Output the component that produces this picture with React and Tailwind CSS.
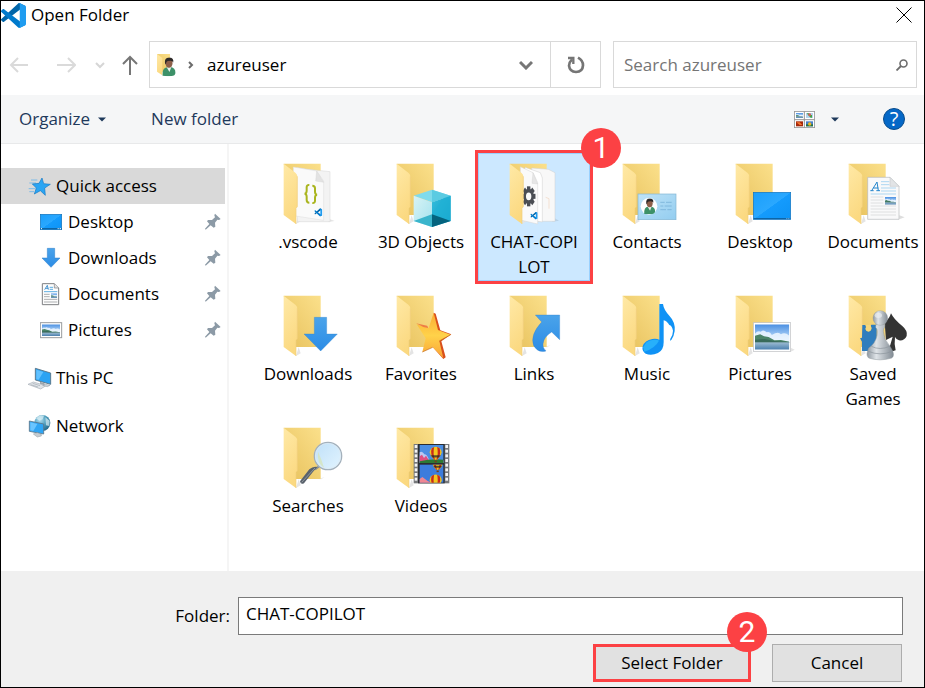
import React from "react";

function VsCodeLogo({ className, x, y, width, height }) {
  return (
    <svg viewBox="0 0 100 100" className={className} x={x} y={y} width={width} height={height} aria-hidden="true">
      <path fill="#0065A9" d="M96.4614 10.7962L75.8569 0.875542C73.4719 -0.272773 70.6217 0.211611 68.75 2.08333L1.29858 63.5832C-0.515693 65.2373 -0.513607 68.0937 1.30308 69.7452L6.81272 74.754C8.29793 76.1042 10.5347 76.2036 12.1338 74.9905L93.3609 13.3699C96.086 11.3026 100 13.2462 100 16.6667V16.4275C100 14.0265 98.6246 11.8378 96.4614 10.7962Z" />
      <path fill="#007ACC" d="M96.4614 89.2038L75.8569 99.1245C73.4719 100.273 70.6217 99.7884 68.75 97.9167L1.29858 36.4169C-0.515693 34.7627 -0.513607 31.9063 1.30308 30.2548L6.81272 25.246C8.29793 23.8958 10.5347 23.7964 12.1338 25.0095L93.3609 86.6301C96.086 88.6974 100 86.7538 100 83.3334V83.5726C100 85.9735 98.6246 88.1622 96.4614 89.2038Z" />
      <path fill="#1F9CF0" d="M75.8578 99.1263C73.4721 100.274 70.6219 99.7885 68.75 97.9166C71.0564 100.223 75 98.5895 75 95.3278V4.67213C75 1.41039 71.0564 -0.223106 68.75 2.08327C70.6219 0.211402 73.4721 -0.273666 75.8578 0.873633L96.4587 10.7807C98.6234 11.8217 100 14.0112 100 16.4132V83.5871C100 85.9891 98.6234 88.1786 96.4586 89.2196L75.8578 99.1263Z" />
    </svg>
  );
}

/* Gradients shared by every drawing in the dialog. */
function Gradients() {
  return (
    <svg width="0" height="0" className="absolute" aria-hidden="true">
      <defs>
        <linearGradient id="back" x1="0" y1="1" x2="1" y2="0">
          <stop offset="0.2" stopColor="#ebc765" />
          <stop offset="1" stopColor="#fbe08b" />
        </linearGradient>
        <linearGradient id="flap" x1="0" y1="0" x2="0.3" y2="1">
          <stop offset="0" stopColor="#ffe9a6" />
          <stop offset="1" stopColor="#fbd981" />
        </linearGradient>
        <linearGradient id="blueArrow" x1="0" y1="0" x2="0" y2="1">
          <stop offset="0" stopColor="#4aa3ea" />
          <stop offset="1" stopColor="#2b8ce6" />
        </linearGradient>
        <linearGradient id="screen" x1="0" y1="0" x2="1" y2="1">
          <stop offset="0" stopColor="#1b9ffb" />
          <stop offset="0.5" stopColor="#2aa8ff" />
          <stop offset="0.51" stopColor="#149bfd" />
          <stop offset="1" stopColor="#0d93f5" />
        </linearGradient>
        <linearGradient id="star" x1="0" y1="0" x2="0" y2="1">
          <stop offset="0" stopColor="#fbab32" />
          <stop offset="0.5" stopColor="#ffd24a" />
          <stop offset="1" stopColor="#f9a336" />
        </linearGradient>
        <linearGradient id="card" x1="0" y1="0" x2="1" y2="1">
          <stop offset="0" stopColor="#bfe3f7" />
          <stop offset="1" stopColor="#93cdf0" />
        </linearGradient>
        <linearGradient id="sky" x1="0" y1="0" x2="0" y2="1">
          <stop offset="0" stopColor="#4a8fe2" />
          <stop offset="1" stopColor="#d9efff" />
        </linearGradient>
        <linearGradient id="water" x1="0" y1="0" x2="0" y2="1">
          <stop offset="0" stopColor="#9dbcd2" />
          <stop offset="1" stopColor="#4a7fae" />
        </linearGradient>
        <linearGradient id="pawn" x1="0" y1="0" x2="1" y2="0">
          <stop offset="0" stopColor="#8e979f" />
          <stop offset="0.35" stopColor="#dfe4e8" />
          <stop offset="1" stopColor="#818a93" />
        </linearGradient>
        <linearGradient id="lens" x1="0" y1="0" x2="1" y2="1">
          <stop offset="0" stopColor="#bfe0f8" />
          <stop offset="1" stopColor="#e2f4ff" />
        </linearGradient>
        <linearGradient id="cubeL" x1="0" y1="0" x2="1" y2="1">
          <stop offset="0" stopColor="#d8f3f5" />
          <stop offset="1" stopColor="#a4e2ee" />
        </linearGradient>
        <linearGradient id="cubeR" x1="0" y1="0" x2="1" y2="1">
          <stop offset="0" stopColor="#35bfdd" />
          <stop offset="1" stopColor="#0796c2" />
        </linearGradient>
        <radialGradient id="globe" cx="0.35" cy="0.3" r="0.8">
          <stop offset="0" stopColor="#b5dff0" />
          <stop offset="0.5" stopColor="#4f9ebd" />
          <stop offset="1" stopColor="#1d5f82" />
        </radialGradient>
      </defs>
    </svg>
  );
}

function Folder({ children, filled }) {
  return (
    <svg viewBox="0 0 216 198" className="h-[66px] w-[72px] shrink-0" aria-hidden="true">
      <path d="M72 183l14-8-6-18z" fill="#e4e4e4" />
      <path d="M140 156l18-6-10 7z" fill="#e9e9e9" />
      <path d="M35 2H146V156H72Z" fill="url(#back)" />
      {filled ? children : null}
      <path d="M35 2L70 29Q76 34 76 40V131L72 136V183L35 156Z" fill="url(#flap)" />
      <path d="M76 40V131L72 136V183" fill="none" stroke="#f0cf7b" strokeWidth="2" />
      {filled ? null : children}
    </svg>
  );
}

function Landscape({ x, y, w, h }) {
  return (
    <svg x={x} y={y} width={w} height={h} viewBox="0 0 106 76" preserveAspectRatio="none">
      <rect width="106" height="54" fill="url(#sky)" />
      <path d="M0 28q8-10 18-6 8-8 18 2 10-4 16 8 20-12 28-2 12-8 26 4V50H0z" fill="#eef7ff" opacity="0.85" />
      <path d="M0 34L16 30l12 6 14 2 18 10 20-1 26 5v3H0z" fill="#4b8468" />
      <path d="M0 46l30-2 30 6 46 3v3H0z" fill="#386a5a" />
      <rect y="54" width="106" height="22" fill="url(#water)" />
    </svg>
  );
}

function Person({ x, y, w, h }) {
  return (
    <svg x={x} y={y} width={w} height={h} viewBox="0 0 60 80">
      <path d="M3 78Q0 44 22 42L34 40Q58 44 57 66 56 78 40 79 20 81 3 78z" fill="#3d9168" />
      <path d="M20 42L32 62 40 41z" fill="#e8f0ec" />
      <ellipse cx="30" cy="24" rx="15" ry="20" fill="#8d5f49" />
      <path d="M13 24Q10 2 30 1 51 1 48 22 45 14 36 14 22 14 19 20 18 28 16 30z" fill="#2d2928" />
    </svg>
  );
}

function Balloon({ x, y, s }) {
  return (
    <g transform={`translate(${x} ${y}) scale(${s})`}>
      <path d="M-20-5a20 19 0 0 1 40 0Q18 8 5 19H-5Q-18 8-20-5z" fill="#f2c61f" />
      <path d="M-13-19Q-20 0-5 19H-2Q-10 0-5-23zM13-19Q20 0 5 19H2Q10 0 5-23z" fill="#c92a1c" />
      <path d="M-17 4h34l-6 8h-22z" fill="#24252b" opacity="0.75" />
      <rect x="-4" y="22" width="8" height="6" fill="#71401d" />
    </g>
  );
}

function VsCodeFolder() {
  return (
    <Folder filled>
      <g transform="translate(-66 -54)">
        <path d="M238 222l16 6-20 3z" fill="#e4e4e4" />
        <path d="M166 72L240 80V230H142V68z" fill="#f3f3f3" stroke="#d4d4d4" strokeWidth="1.5" />
        <path d="M130 66L200 78 221 108V226L130 212z" fill="#fafafa" stroke="#dcdcdc" strokeWidth="1.5" />
        <path d="M200 78L197 108 221 112z" fill="#e3e3e3" stroke="#cfcfcf" strokeWidth="1" />
        <g fill="none" stroke="#aab51f" strokeWidth="6">
          <path d="M178 120q-8-1-8 7v10q0 8-6 9 6 1 6 9v10q0 8 8 8" />
          <path d="M187 122q8 0 8 8v10q0 8 6 9-6 1-6 9v9q0 8-8 7" />
        </g>
        <VsCodeLogo x="193" y="188" width="24" height="28" />
      </g>
    </Folder>
  );
}

function ObjectsFolder() {
  return (
    <Folder>
      <g transform="translate(-405 -54)">
        <path d="M491 152L546 134 602 152 546 172z" fill="#7fdbec" />
        <path d="M546 134L602 152 546 172z" fill="#5bcbe2" />
        <path d="M491 152L546 172V246L491 228z" fill="url(#cubeL)" />
        <path d="M491 228L546 208V246z" fill="#3ab5cc" />
        <path d="M546 172L602 152V228L546 246z" fill="url(#cubeR)" />
        <path d="M602 152V228L546 208 580 160z" fill="#21b2d6" opacity="0.7" />
        <path d="M546 208L602 228 546 246z" fill="#04637e" />
      </g>
    </Folder>
  );
}

function CopilotFolder() {
  const teeth = [0, 45, 90, 135, 180, 225, 270, 315];
  return (
    <Folder filled>
      <g transform="translate(-99 -129)">
        <path d="M262 290l20 12-20 3z" fill="#b9d3e8" />
        <path d="M200 144L250 148 270 158V304H200z" fill="#f8f8f8" stroke="#d0d0d0" strokeWidth="1.5" />
        <path d="M180 142L226 158 232 174V306L180 298z" fill="#fff" stroke="#cfcfcf" strokeWidth="1.5" />
        <path d="M166 140L204 158 218 188V312L166 300z" fill="#fafafa" stroke="#d4d4d4" strokeWidth="1.5" />
        <path d="M204 158l-3 32 17 2z" fill="#e6e6e6" stroke="#ccc" strokeWidth="1" />
        <path d="M242 232l10 4v30" fill="none" stroke="#f4e1d2" strokeWidth="3" />
        <g transform="translate(191 229) scale(0.85 1.25)">
          {teeth.map((a) => (
            <rect key={a} x="-6" y="-24" width="12" height="12" fill="#4b4e54" transform={`rotate(${a})`} />
          ))}
          <circle r="14" fill="none" stroke="#4b4e54" strokeWidth="9" />
        </g>
        <VsCodeLogo x="196" y="272" width="22" height="30" />
      </g>
    </Folder>
  );
}

function ContactsFolder() {
  return (
    <Folder>
      <g transform="translate(-438 -129)">
        <rect x="519" y="222" width="114" height="77" fill="url(#card)" stroke="#82b4d3" strokeWidth="2" />
        <circle cx="552" cy="259" r="25" fill="#fff" />
        <Person x="530" y="235" w="48" h="48" />
        <path d="M586 247h13m4 0h17M586 258h9m4 0h21M586 269h17m4 0h13" stroke="#6ea9d2" strokeWidth="2" />
      </g>
    </Folder>
  );
}

function DesktopFolder() {
  return (
    <Folder>
      <g transform="translate(-72 -39)">
        <rect x="160" y="127" width="112" height="81" fill="url(#screen)" stroke="#1173bd" strokeWidth="2" />
        <path d="M161 206H271" stroke="#0d5c98" strokeWidth="3" />
        <path d="M259 206h3m3 0h3" stroke="#d8ecfa" strokeWidth="2" />
      </g>
    </Folder>
  );
}

function DocumentsFolder() {
  return (
    <Folder>
      <g transform="translate(-411 -39)">
        <path d="M598 196l16 6-16 6z" fill="#dedede" />
        <path d="M503 82H570L597 109V208H503z" fill="#f9f9fa" stroke="#b5b8bb" strokeWidth="2" />
        <path d="M570 82V109H597z" fill="#e2e4e6" stroke="#bfc2c5" strokeWidth="1.5" />
        <path d="M543 95h25M543 104h25M543 114h45M543 123h45M512 132h76" stroke="#9dd0ef" strokeWidth="2.5" />
        <path d="M515 122L531 96 535 122M520 114H535M511 122H521M529 122H540" fill="none" stroke="#2485cc" strokeWidth="3" />
        <path d="M512 141h38M512 150h38M512 159h38M512 168h76M512 177h76M512 186h76M512 195h76" stroke="#d0d2d4" strokeWidth="2" />
        <Landscape x={555} y={141} w={33} h={23} />
      </g>
    </Folder>
  );
}

function DownloadsFolder() {
  return (
    <Folder>
      <g transform="translate(-66 -30)">
        <path d="M193 97H230V147H262L212 198 162 147H193z" fill="url(#blueArrow)" stroke="#2f7fc9" strokeWidth="1" />
      </g>
    </Folder>
  );
}

function FavoritesFolder() {
  return (
    <Folder>
      <g transform="translate(-405 -30)">
        <path d="M551 83L557 86 571 136 604 148 574 169 587 217 580 222 548 186z" fill="#d9501c" />
        <path d="M551 83L564 135 602 149 568 168 580 220 548 187 517 201 527 160 500 118 536 129z" fill="url(#star)" />
        <path d="M498 115L531 122 536 129 520 126z" fill="#ee7d45" />
        <path d="M548 187L517 201M602 149L568 168" stroke="#bf6517" strokeWidth="2" />
      </g>
    </Folder>
  );
}

function LinksFolder() {
  return (
    <Folder>
      <g transform="translate(-69 -30)">
        <path d="M181 90H254V164L230 141Q206 155 204 177 203 189 213 198 190 205 176 182 164 150 200 111z" fill="url(#blueArrow)" stroke="#2e7dc8" strokeWidth="1" />
      </g>
    </Folder>
  );
}

function MusicFolder() {
  return (
    <Folder>
      <g transform="translate(-408 -30)">
        <path d="M553 57H564Q566 74 583 92 602 112 599 138 597 154 589 165L585 167 586 161Q594 150 594 137 591 122 583 120 576 108 566 106V172Q566 196 549 204 529 213 512 206 500 199 503 184 509 166 532 162 544 160 553 164z" fill="#0f92f5" />
        <path d="M505 187Q512 168 532 165 547 163 552 167 540 190 508 200z" fill="#27b0fb" />
      </g>
    </Folder>
  );
}

function PicturesFolder() {
  return (
    <Folder>
      <g transform="translate(-72 -30)">
        <path d="M272 188l12 6-12 6z" fill="#e4e4e4" />
        <rect x="160" y="113" width="112" height="86" fill="#fff" stroke="#bcbec0" strokeWidth="2" />
        <Landscape x={165} y={118} w={103} h={76} />
      </g>
    </Folder>
  );
}

function GamesFolder() {
  return (
    <Folder>
      <g transform="translate(-411 -30)">
        <path d="M487 120H496Q500 126 496 132 500 143 510 138 518 132 512 122L514 119H530V198H486V183L495 188V182Q492 171 504 168 512 166 515 176 516 184 506 188L507 198H486V170L480 160 486 158z" fill="#2f7dbd" />
        <path d="M497 120Q501 126 497 132 500 142 510 138 517 132 511 120z" fill="#f6d87d" />
        <path d="M573 85Q582 104 606 122 624 137 620 153 613 168 597 166 589 164 585 156 582 178 587 196L572 200 568 190 578 155 558 165 554 112Q568 102 573 85z" fill="#333" />
        <path d="M528 118H555L554 127Q549 132 550 139 551 164 570 184L578 198Q584 214 575 219 540 230 506 219 498 212 503 198 504 188 514 183 533 163 532 139 532 131 527 127z" fill="url(#pawn)" stroke="#8b949b" strokeWidth="1.5" />
        <path d="M505 199Q540 214 577 199M514 184Q540 197 569 184" fill="none" stroke="#8b949b" strokeWidth="2" />
        <circle cx="541" cy="99" r="22" fill="url(#pawn)" stroke="#8b949b" strokeWidth="1" />
        <ellipse cx="535" cy="91" rx="11" ry="8" fill="#e9edf0" opacity="0.7" />
      </g>
    </Folder>
  );
}

function SearchesFolder() {
  return (
    <Folder>
      <g transform="translate(-66 -36)">
        <path d="M195 163L207 154" stroke="#8a9097" strokeWidth="6" />
        <path d="M202 156L188 172 162 205Q152 210 150 199L178 163Q190 152 202 156z" fill="#5a626c" />
        <path d="M195 159L155 202" stroke="#8e979f" strokeWidth="3" />
        <circle cx="234" cy="123" r="41" fill="url(#lens)" stroke="#a3b0bb" strokeWidth="4" />
        <circle cx="234" cy="123" r="38" fill="none" stroke="#dfeaf2" strokeWidth="2" />
        <path d="M204 110Q200 145 222 158 214 130 204 110z" fill="#d6e5bd" opacity="0.8" />
      </g>
    </Folder>
  );
}

function VideosFolder() {
  const holes = [90, 104, 118, 132, 146, 160, 174, 188];
  return (
    <Folder>
      <g transform="translate(-405 -36)">
        <rect x="491" y="87" width="107" height="118" fill="#77797c" />
        <rect x="504" y="87" width="80" height="118" fill="#2b2d31" />
        {holes.map((y) => (
          <g key={y} fill="#f4f4f4">
            <rect x="494" y={y} width="8" height="9" />
            <rect x="586" y={y} width="8" height="9" />
          </g>
        ))}
        <rect x="509" y="90" width="71" height="54" fill="#4a8de3" />
        <rect x="509" y="149" width="71" height="54" fill="#3c7cdc" />
        <path d="M509 112q8-6 14 6 8 0 14 16l43 2v8h-71z" fill="#b9c7f2" />
        <path d="M509 124l7-5 6 10 6-7 12 18h-31z" fill="#e04f82" />
        <path d="M509 139q36-9 71-5v10h-71z" fill="#2c7a34" />
        <path d="M509 192l8-6 8 6 8 6 12 5h-36z" fill="#ef8793" />
        <Balloon x={557} y={117} s={0.9} />
        <svg x="546" y="149" width="34" height="28" viewBox="0 0 34 28">
          <Balloon x={17} y={0} s={0.8} />
        </svg>
        <svg x="532" y="176" width="48" height="27" viewBox="0 0 48 27">
          <Balloon x={25} y={24} s={0.9} />
        </svg>
      </g>
    </Folder>
  );
}

const FILES = [
  { name: ".vscode", Icon: VsCodeFolder },
  { name: "3D Objects", Icon: ObjectsFolder },
  { name: "CHAT-COPILOT", Icon: CopilotFolder, selected: true },
  { name: "Contacts", Icon: ContactsFolder },
  { name: "Desktop", Icon: DesktopFolder },
  { name: "Documents", Icon: DocumentsFolder },
  { name: "Downloads", Icon: DownloadsFolder },
  { name: "Favorites", Icon: FavoritesFolder },
  { name: "Links", Icon: LinksFolder },
  { name: "Music", Icon: MusicFolder },
  { name: "Pictures", Icon: PicturesFolder },
  { name: "Saved Games", Icon: GamesFolder },
  { name: "Searches", Icon: SearchesFolder },
  { name: "Videos", Icon: VideosFolder },
];

function SideSvg({ children, viewBox }) {
  return (
    <svg viewBox={viewBox} className="size-6 shrink-0" aria-hidden="true">
      {children}
    </svg>
  );
}

const QuickIcon = () => (
  <SideSvg viewBox="84 72 72 72">
    <path d="M93 90H112M88 99H108M86 116H106M88 125H102" stroke="#7dbbe6" strokeWidth="3" />
    <path d="M126 84L131 101 151 103 134 114 136 136 121 122 103 132 109 114 97 102 117 100z" fill="#2aa5f3" stroke="#1579c4" strokeWidth="2" />
  </SideSvg>
);
const DesktopIcon = () => (
  <SideSvg viewBox="120 180 72 72">
    <rect x="121" y="193" width="64" height="46" fill="url(#screen)" stroke="#1170b7" strokeWidth="2" />
    <path d="M121 236H185" stroke="#0d66a8" strokeWidth="4" />
    <path d="M123 236h3M173 236h3m3 0h4" stroke="#fff" strokeWidth="3" />
  </SideSvg>
);
const DownloadIcon = () => (
  <SideSvg viewBox="120 288 72 72">
    <path d="M142 295H164V324H180L153 352 126 324H142z" fill="url(#blueArrow)" stroke="#2a7dc9" strokeWidth="1.5" />
  </SideSvg>
);
const DocumentIcon = () => (
  <SideSvg viewBox="120 396 72 72">
    <path d="M127 401H163L176 414V464H127z" fill="#fdfdfd" stroke="#7d7f82" strokeWidth="3" />
    <path d="M163 401V414H176" fill="#e3e3e3" stroke="#7d7f82" strokeWidth="2" />
    <path d="M134 419L142 406 145 419M137 415h8" fill="none" stroke="#2a83c8" strokeWidth="2.5" />
    <path d="M149 412h10M149 418h10M132 425h40" stroke="#3f9ddb" strokeWidth="2.5" />
    <path d="M132 433h17M132 440h17M132 448h40M132 456h40" stroke="#9b9da0" strokeWidth="2.5" />
    <Landscape x={153} y={430} w={18} h={14} />
  </SideSvg>
);
const PictureIcon = () => (
  <SideSvg viewBox="120 504 72 72">
    <rect x="121" y="518" width="64" height="45" fill="#fff" stroke="#9a9c9f" strokeWidth="3" />
    <Landscape x={126} y={523} w={54} h={35} />
  </SideSvg>
);
const PcIcon = () => (
  <SideSvg viewBox="84 648 72 72">
    <path d="M106 655L152 669V703L106 690z" fill="#2ca3f3" stroke="#566b7a" strokeWidth="2.5" />
    <path d="M109 659L130 666 116 689 109 688z" fill="#61c1ff" />
    <path d="M120 695L134 700V706L120 703z" fill="#9ca5ac" />
    <path d="M84 703L100 696 138 707 122 717z" fill="#dfe3e7" stroke="#a9b1b8" strokeWidth="2" />
    <path d="M92 704l22 7M98 700l22 7M136 703l14 3-8 4-14-4z" stroke="#909ba4" strokeWidth="1.5" fill="#cfd5d9" />
  </SideSvg>
);
const NetworkIcon = () => (
  <SideSvg viewBox="84 792 72 72">
    <circle cx="127" cy="819" r="24" fill="url(#globe)" />
    <path d="M108 805Q120 792 132 797L128 808 118 812zM136 802L149 812 148 828 138 826z" fill="#dbf0f5" opacity="0.7" />
    <path d="M88 813L131 822V852L88 844z" fill="#2fa5f4" stroke="#5b7688" strokeWidth="2.5" />
    <path d="M91 817L112 822 100 843 91 841z" fill="#6ac5ff" />
    <path d="M100 852L112 848 124 853V858L112 861z" fill="#c5ccd1" stroke="#8f9aa2" strokeWidth="1.5" />
  </SideSvg>
);

function Pin() {
  return (
    <svg viewBox="612 190 54 54" className="size-[18px] shrink-0" aria-hidden="true">
      <path d="M645 192L662 208 657 211 652 210 645 219 646 231 641 234 632 227 617 240 615 237 628 223 621 215 624 211 636 211 645 203 643 197z" fill="#8c9aa6" />
    </svg>
  );
}

const PINNED = [
  { name: "Desktop", Icon: DesktopIcon },
  { name: "Downloads", Icon: DownloadIcon },
  { name: "Documents", Icon: DocumentIcon },
  { name: "Pictures", Icon: PictureIcon },
];

function Badge({ children, className }) {
  return (
    <span
      className={
        "absolute z-10 flex size-10 items-center justify-center rounded-full bg-[#fc4144] font-[Roboto,Arial,sans-serif] text-[30px] leading-10 text-white " +
        className
      }
    >
      {children}
    </span>
  );
}

function FileItem({ name, Icon, selected }) {
  return (
    <button
      type="button"
      aria-pressed={!!selected}
      className="relative flex min-h-32 flex-col items-center pt-[10px] text-center"
    >
      {selected && (
        <span className="absolute -inset-x-2 -inset-y-[3px] border-3 border-[#fc4144] bg-[#cce8ff]">
          <span className="block h-full border border-[#99d1ff]" />
        </span>
      )}
      <span className="relative">
        <Icon />
      </span>
      <span className={"relative w-24 text-[17px] leading-[25px] " + (selected ? "break-all" : "")}>{name}</span>
      {selected && <Badge className="-top-[25px] -right-9">1</Badge>}
    </button>
  );
}

function TitleBar() {
  return (
    <header className="flex h-7 items-center justify-between pr-3">
      <h1 className="flex items-center gap-[5px] text-[17px] leading-6">
        <VsCodeLogo className="size-[25px] shrink-0" />
        Open Folder
      </h1>
      <button type="button" aria-label="Close">
        <svg viewBox="0 0 16 16" className="size-4" aria-hidden="true">
          <path d="M0.5 0.5L15.5 15.5M15.5 0.5L0.5 15.5" stroke="#000" strokeWidth="1" />
        </svg>
      </button>
    </header>
  );
}

function NavBar() {
  return (
    <div className="flex items-center gap-[10px] pt-3 pr-[7px] pb-[7px] pl-2">
      <div className="flex w-[130px] items-center justify-between">
        <button type="button" aria-label="Back">
          <svg viewBox="0 0 20 20" className="size-5" fill="none" stroke="#dadada" strokeWidth="2">
            <path d="M19 10H3M9 3L2 10L9 17" />
          </svg>
        </button>
        <button type="button" aria-label="Forward" className="ml-3">
          <svg viewBox="0 0 20 20" className="size-5" fill="none" stroke="#dadada" strokeWidth="2">
            <path d="M1 10H18M12 3L19 10L12 17" />
          </svg>
        </button>
        <button type="button" aria-label="Recent locations" className="ml-1">
          <svg viewBox="0 0 12 8" className="h-2 w-3" fill="none" stroke="#d6d6d6" strokeWidth="2">
            <path d="M2 2L6 6L10 2" />
          </svg>
        </button>
        <button type="button" aria-label="Up">
          <svg viewBox="0 0 18 20" className="h-5 w-[18px]" fill="none" stroke="#767676" strokeWidth="2">
            <path d="M9 20V2M2 9L9 2L16 9" />
          </svg>
        </button>
      </div>
      <div className="flex min-w-0 flex-1 items-center gap-3">
        <div className="flex h-[47px] min-w-0 flex-1 items-stretch border border-[#d9d9d9]">
          <div className="flex min-w-0 flex-1 items-center pl-[6px]">
            <svg viewBox="465 160 60 70" className="h-6 w-5 shrink-0" aria-hidden="true">
              <path d="M468 162H507V215H478z" fill="url(#back)" />
              <path d="M468 162L484 174V226L468 215z" fill="url(#flap)" />
              <Person x="482" y="172" w="44" h="57" />
            </svg>
            <svg viewBox="0 0 6 8" className="ml-3 h-2 w-[6px] shrink-0" fill="none" stroke="#6b6b6b" strokeWidth="2">
              <path d="M1 1L4 4L1 7" />
            </svg>
            <span className="ml-[13px] text-[17px]">azureuser</span>
          </div>
          <button type="button" aria-label="Previous locations" className="flex w-12 items-center justify-center">
            <svg viewBox="0 0 14 10" className="h-[10px] w-[14px]" fill="none" stroke="#767676" strokeWidth="3">
              <path d="M1 2L7 8L13 2" />
            </svg>
          </button>
          <button
            type="button"
            aria-label="Refresh"
            className="flex w-[50px] items-center justify-center border-l border-[#d9d9d9]"
          >
            <svg viewBox="201 168 54 54" className="size-[18px]" fill="none" stroke="#757575">
              <path d="M234 173Q249 181 249 196 248 215 228 216 209 215 207 197 207 187 216 178" strokeWidth="8" />
              <path d="M204 174H220V192" strokeWidth="7" />
            </svg>
          </button>
        </div>
        <div className="flex h-[47px] w-[304px] items-center border border-[#d9d9d9] pr-2 pl-[10px]">
          <input
            type="search"
            aria-label="Search azureuser"
            placeholder="Search azureuser"
            className="min-w-0 flex-1 bg-transparent text-[17px] outline-none placeholder:text-[#757575]"
          />
          <svg viewBox="0 0 12 12" className="size-3 shrink-0" fill="none" stroke="#6d6d6d" aria-hidden="true">
            <circle cx="7.5" cy="4.5" r="3.5" strokeWidth="1.6" />
            <path d="M5 7L0.5 11.5" strokeWidth="1.8" />
          </svg>
        </div>
      </div>
    </div>
  );
}

function Caret() {
  return (
    <svg viewBox="0 0 8 5" className="h-[5px] w-2" aria-hidden="true">
      <path d="M0 0.5H8L4 4.5z" fill="#1e395b" />
    </svg>
  );
}

function Toolbar() {
  return (
    <div className="flex h-[49px] items-center border-b border-[#e8e9ea] bg-[#f5f6f7] pr-[19px] pl-[18px] text-[17px] text-[#1e395b]">
      <button type="button" className="flex items-center gap-2">
        Organize <Caret />
      </button>
      <button type="button" className="ml-[45px]">New folder</button>
      <button type="button" aria-label="Change your view" className="ml-auto flex items-center gap-4">
        <svg viewBox="882 327 63 51" className="h-[17px] w-[21px]" aria-hidden="true">
          <rect x="883" y="328" width="61" height="49" fill="#fff" stroke="#969696" strokeWidth="3" />
          <path d="M913 328V377M883 353H944" stroke="#969696" strokeWidth="3" />
          <Landscape x={888} y={333} w={21} h={15} />
          <rect x="918" y="333" width="21" height="15" fill="#b4d3ef" />
          <path d="M920 334h8v5h8v8h-4l-6-6z" fill="#46a243" />
          <circle cx="929" cy="338" r="4" fill="#db5a58" />
          <rect x="888" y="358" width="21" height="15" fill="#a7290b" />
          <path d="M889 361h10l8 8h-8z" fill="#f67832" />
          <rect x="918" y="358" width="21" height="15" fill="#457ecb" />
          <path d="M918 367h21v6h-21z" fill="#28723b" />
          <circle cx="929" cy="366" r="5" fill="#efb91f" />
        </svg>
        <Caret />
      </button>
      <button
        type="button"
        aria-label="Help"
        className="ml-11 flex size-[22px] items-center justify-center rounded-full border border-[#094c8c] bg-[#0568c7] text-[20px] leading-5 text-white"
      >
        ?
      </button>
    </div>
  );
}

function Sidebar() {
  return (
    <nav aria-label="Locations" className="w-[228px] shrink-0 border-r-2 border-[#f5f5f5] pt-6 pr-0.5 text-[17px]">
      <a href="#quick-access" className="flex h-9 items-center gap-1 bg-[#d9d9d9] pl-[27px]">
        <QuickIcon />
        Quick access
      </a>
      <ul>
        {PINNED.map(({ name, Icon }) => (
          <li key={name}>
            <a href={"#" + name.toLowerCase()} className="flex h-9 items-center gap-1 pr-[3px] pl-[39px]">
              <Icon />
              <span className="flex-1">{name}</span>
              <Pin />
            </a>
          </li>
        ))}
      </ul>
      <a href="#this-pc" className="mt-3 flex h-9 items-center gap-1 pl-[27px]">
        <PcIcon />
        This PC
      </a>
      <a href="#network" className="mt-3 flex h-9 items-center gap-1 pl-[27px]">
        <NetworkIcon />
        Network
      </a>
    </nav>
  );
}

export default function App() {
  return (
    <div className="flex min-h-screen flex-col border border-black bg-white font-['Open_Sans','Noto_Sans',sans-serif] text-black">
      <Gradients />
      <TitleBar />
      <NavBar />
      <Toolbar />
      <div className="flex flex-1">
        <Sidebar />
        <main className="grid min-w-0 flex-1 grid-cols-[repeat(auto-fill,102px)] content-start gap-x-[11px] gap-y-1 pt-[9px] pl-7">
          {FILES.map((file) => (
            <FileItem key={file.name} {...file} />
          ))}
        </main>
      </div>
      <footer className="flex flex-col gap-[9px] bg-[#f0f0f0] pt-[26px] pr-[21px] pb-[5px] text-[17px]">
        <div className="flex items-center">
          <label htmlFor="folder" className="w-[229px] shrink-0 text-right">
            Folder:
          </label>
          <input
            id="folder"
            type="text"
            defaultValue="CHAT-COPILOT"
            className="ml-2 h-[38px] min-w-0 flex-1 border border-[#7a7a7a] bg-white px-[7px] pb-[5px] outline-none"
          />
        </div>
        <div className="flex justify-end gap-[21px] pr-px">
          <div className="relative">
            <button type="submit" className="h-[38px] w-[158px] border-3 border-[#fc4144] bg-[#e1e1e1]">
              Select Folder
            </button>
            <Badge className="-top-8 -right-4">2</Badge>
          </div>
          <button type="button" className="h-[38px] w-[130px] border border-[#adadad] bg-[#e1e1e1]">
            Cancel
          </button>
        </div>
      </footer>
    </div>
  );
}
